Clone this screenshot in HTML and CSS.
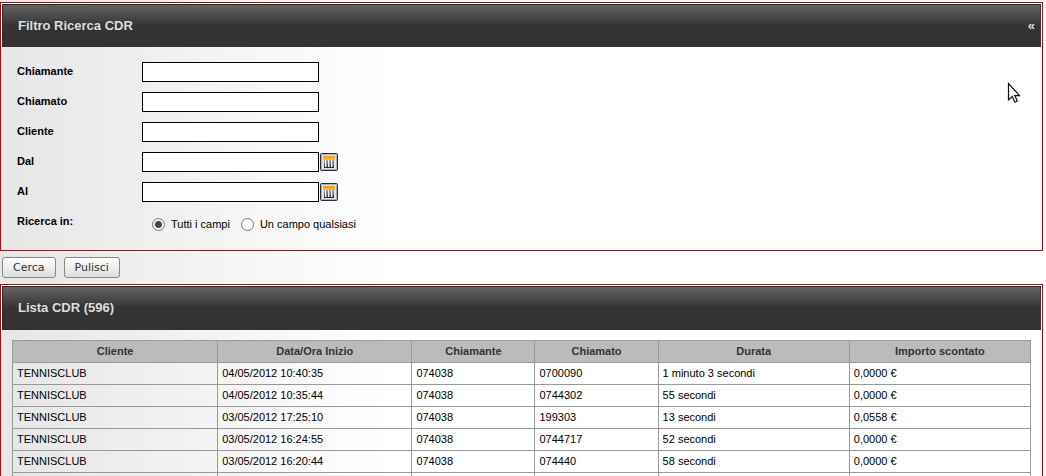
FILE: index.html
```html
<!DOCTYPE html>
<html lang="it">
<head>
  <meta charset="UTF-8" />
  <meta name="viewport" content="width=device-width, initial-scale=1.0"/>
  <title>Ricerca CDR</title>
  <link rel="stylesheet" href="styles.css">
</head>
<body>

  <form id="cdr-form">
    <div class="panel">
      <div class="panel-header">
        <h2>Filtro Ricerca CDR</h2>
        <button type="button" id="toggle" class="toggle" title="Chiudi">«</button>
      </div>
      <div class="filters" id="filters">
        <div class="field">
          <label for="chiamante">Chiamante</label>
          <input type="text" id="chiamante" />
        </div>
        <div class="field">
          <label for="chiamato">Chiamato</label>
          <input type="text" id="chiamato" />
        </div>
        <div class="field">
          <label for="cliente">Cliente</label>
          <input type="text" id="cliente" />
        </div>
        <div class="field">
          <label for="dal">Dal</label>
          <input type="text" id="dal" />
          <button type="button" class="calendar" aria-label="Scegli data iniziale">
            <svg width="18" height="18" viewBox="0 0 18 18"><use href="#cal"/></svg>
          </button>
        </div>
        <div class="field">
          <label for="al">Al</label>
          <input type="text" id="al" />
          <button type="button" class="calendar" aria-label="Scegli data finale">
            <svg width="18" height="18" viewBox="0 0 18 18"><use href="#cal"/></svg>
          </button>
        </div>
        <div class="field" role="radiogroup" aria-labelledby="ricerca-label">
          <span class="label" id="ricerca-label">Ricerca in:</span>
          <div class="radios">
            <label><input type="radio" name="campi" value="tutti" checked /> Tutti i campi</label>
            <label><input type="radio" name="campi" value="uno" /> Un campo qualsiasi</label>
          </div>
        </div>
      </div>
    </div>

    <div class="actions">
      <button type="submit">Cerca</button>
      <button type="reset">Pulisci</button>
    </div>
  </form>

  <div class="panel">
    <div class="panel-header list-header">
      <h2>Lista CDR (596)</h2>
    </div>
    <div class="list">
      <table>
        <colgroup>
          <col class="col-cliente"><col class="col-data"><col class="col-num"><col class="col-num"><col class="col-durata"><col class="col-importo">
        </colgroup>
        <thead>
          <tr><th>Cliente</th><th>Data/Ora Inizio</th><th>Chiamante</th><th>Chiamato</th><th>Durata</th><th>Importo scontato</th></tr>
        </thead>
        <tbody>
          <tr><td>TENNISCLUB</td><td>04/05/2012 10:40:35</td><td>074038</td><td>0700090</td><td>1 minuto 3 secondi</td><td>0,0000 €</td></tr>
          <tr><td>TENNISCLUB</td><td>04/05/2012 10:35:44</td><td>074038</td><td>0744302</td><td>55 secondi</td><td>0,0000 €</td></tr>
          <tr><td>TENNISCLUB</td><td>03/05/2012 17:25:10</td><td>074038</td><td>199303</td><td>13 secondi</td><td>0,0558 €</td></tr>
          <tr><td>TENNISCLUB</td><td>03/05/2012 16:24:55</td><td>074038</td><td>0744717</td><td>52 secondi</td><td>0,0000 €</td></tr>
          <tr><td>TENNISCLUB</td><td>03/05/2012 16:20:44</td><td>074038</td><td>074440</td><td>58 secondi</td><td>0,0000 €</td></tr>
          <tr><td></td><td></td><td></td><td></td><td></td><td></td></tr>
        </tbody>
      </table>
    </div>
  </div>

  <!-- mouse pointer -->
  <svg class="pointer" width="14" height="22" viewBox="0 0 14 22" aria-hidden="true">
    <path d="M1.5 1.5V18L5.2 14.6L8 20.2L10.3 19L7.8 13.6H12.5Z" fill="#fff" stroke="#111" stroke-width="1.2"/>
  </svg>

  <!-- shared calendar icon -->
  <svg class="defs" width="0" height="0" aria-hidden="true">
    <defs>
      <linearGradient id="cal-bars" x1="0" y1="0" x2="0" y2="1">
        <stop offset="0" stop-color="#aaa"/>
        <stop offset="1" stop-color="#222"/>
      </linearGradient>
      <linearGradient id="cal-top" x1="0" y1="0" x2="0" y2="1">
        <stop offset="0" stop-color="#f39a00"/>
        <stop offset="1" stop-color="#fbbf45"/>
      </linearGradient>
      <symbol id="cal" viewBox="0 0 18 18">
        <rect x="0.5" y="0.5" width="17" height="17" rx="1" fill="#dfe3ea" stroke="#2b2d33"/>
        <rect x="1.5" y="1.5" width="15" height="15" fill="none" stroke="#a9b0bf"/>
        <rect x="3" y="3" width="12" height="4" fill="url(#cal-top)"/>
        <rect x="4" y="7" width="10" height="8" fill="#f4f4f4"/>
        <path d="M4 7h1v8H4zM7 7h1v8H7zM10 7h1v8h-1zM13 7h1v8h-1zM4 14h10v1H4z" fill="url(#cal-bars)"/>
        <path d="M6 7h1v7H6zM9 7h1v7H9zM12 7h1v7h-1z" fill="#999"/>
      </symbol>
    </defs>
  </svg>

  <script>
    document.getElementById('toggle').addEventListener('click', function () {
      const box = document.getElementById('filters');
      box.hidden = !box.hidden;
      this.textContent = box.hidden ? '»' : '«';
    });

    document.getElementById('cdr-form').addEventListener('submit', e => e.preventDefault());
  </script>
</body>
</html>
```
FILE: styles.css
```css
body {
  margin: 0;
  padding: 2px 3px 0 0;
  font-family: "Liberation Sans", Arial, sans-serif;
  font-size: 11px;
  line-height: 13px;
  color: #000;
  background: linear-gradient(to right, #e6e6e6, #fff 390px);
}

.panel {
  border: 1px solid #a80f14;
}

.panel-header {
  display: flex;
  align-items: center;
  justify-content: space-between;
  box-sizing: border-box;
  height: 44px;
  padding: 0 6px 0 16px;
  border: 1px solid #fff;
  border-bottom: 0;
  background: linear-gradient(#666, #333 22px) padding-box;
  box-shadow: inset 0 1px #2b2b2b, inset 1px 0 #333, inset -1px 0 #333;
}

.panel-header h2 {
  margin: 0;
  font-size: 13px;
  line-height: 16px;
  color: #ddd;
}

.toggle {
  padding: 0;
  border: 0;
  background: none;
  font: bold 13px "Liberation Sans", Arial, sans-serif;
  color: #ddd;
  cursor: pointer;
}

.filters {
  padding: 15px 16px 8px;
}

.field {
  display: flex;
  align-items: flex-start;
  height: 30px;
}

.field > label,
.label {
  width: 125px;
  padding-top: 3px;
  font-weight: bold;
}

.field input[type="text"] {
  box-sizing: border-box;
  width: 177px;
  height: 20px;
  padding: 2px;
  border: 1px solid #000;
  background: #fff;
  font: inherit;
}

.calendar {
  width: 18px;
  height: 18px;
  margin: 1px;
  padding: 0;
  border: 0;
  background: none;
  cursor: pointer;
}

.calendar svg {
  display: block;
}

.radios {
  display: flex;
  gap: 11px;
  padding: 6px 10px;
}

.radios label {
  display: flex;
  align-items: center;
  gap: 6px;
}

.radios input {
  appearance: none;
  width: 13px;
  height: 13px;
  margin: 0;
  border: 1px solid #777;
  border-radius: 50%;
  background: #fff;
}

.radios input:checked {
  background: radial-gradient(circle, #444 3px, #f2f2f2 4px);
}

.actions {
  display: flex;
  gap: 8px;
  padding: 6px 2px;
}

.actions button {
  height: 21px;
  padding: 0 10px;
  border: 1px solid #888;
  border-radius: 3px;
  background: linear-gradient(#fff, #ddd);
  font: 11px "DejaVu Sans", sans-serif;
  color: #333;
}

.list-header {
  height: 45px;
}

.list {
  padding: 10px 11px;
}

table {
  width: 100%;
  table-layout: fixed;
  border-collapse: collapse;
}

.col-cliente { width: 205px; }
.col-data { width: 194px; }
.col-num { width: 123px; }
.col-durata { width: 191px; }
.col-importo { width: 181px; }

th,
td {
  height: 13px;
  padding: 4px;
  border: 1px solid #999;
}

th {
  background: #bbb;
  color: #333;
}

td {
  text-align: left;
}

.pointer {
  position: absolute;
  top: 82px;
  right: 25px;
}

.defs {
  position: absolute;
}
```
